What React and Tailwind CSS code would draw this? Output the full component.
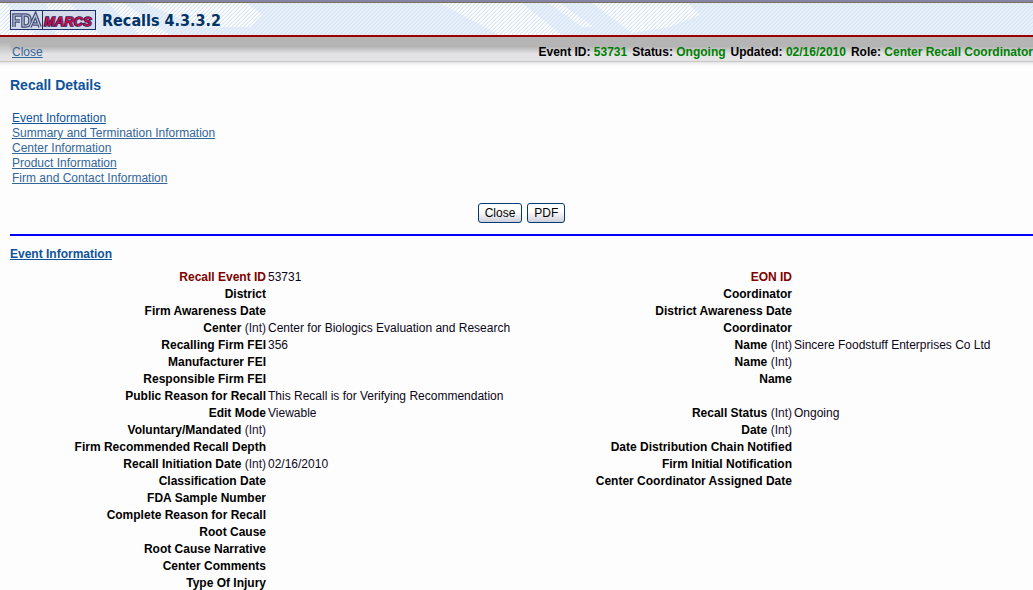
const EVENT_ROWS = [
  [{ label: 'Recall Event ID', value: '53731', accent: true }, { label: 'EON ID', accent: true }],
  [{ label: 'District' }, { label: 'Coordinator' }],
  [{ label: 'Firm Awareness Date' }, { label: 'District Awareness Date' }],
  [{ label: 'Center', int: true, value: 'Center for Biologics Evaluation and Research' }, { label: 'Coordinator' }],
  [{ label: 'Recalling Firm FEI', value: '356' }, { label: 'Name', int: true, value: 'Sincere Foodstuff Enterprises Co Ltd' }],
  [{ label: 'Manufacturer FEI' }, { label: 'Name', int: true }],
  [{ label: 'Responsible Firm FEI' }, { label: 'Name' }],
  [{ label: 'Public Reason for Recall', value: 'This Recall is for Verifying Recommendation' }, null],
  [{ label: 'Edit Mode', value: 'Viewable' }, { label: 'Recall Status', int: true, value: 'Ongoing' }],
  [{ label: 'Voluntary/Mandated', int: true }, { label: 'Date', int: true }],
  [{ label: 'Firm Recommended Recall Depth' }, { label: 'Date Distribution Chain Notified' }],
  [{ label: 'Recall Initiation Date', int: true, value: '02/16/2010' }, { label: 'Firm Initial Notification' }],
  [{ label: 'Classification Date' }, { label: 'Center Coordinator Assigned Date' }],
  [{ label: 'FDA Sample Number' }, null],
  [{ label: 'Complete Reason for Recall' }, null],
  [{ label: 'Root Cause' }, null],
  [{ label: 'Root Cause Narrative' }, null],
  [{ label: 'Center Comments' }, null],
  [{ label: 'Type Of Injury' }, null],
];

const SECTIONS = [
  'Event Information',
  'Summary and Termination Information',
  'Center Information',
  'Product Information',
  'Firm and Contact Information',
];

const STATUS = [
  ['Event ID:', '53731'],
  ['Status:', 'Ongoing'],
  ['Updated:', '02/16/2010'],
  ['Role:', 'Center Recall Coordinator'],
];

function Logo() {
  const fda = 'M4 17V5h7M4 11h6M13 16V5h3q4 0 4 5.5t-4 5.500zM20 17l5.500-12 4.500 12M23 14h5';
  return (
    <svg className="h-5 w-[86px] shrink-0" viewBox="0 0 86 20" role="img" aria-label="FDA MARCS">
      <rect x="0.5" y="0.5" width="85" height="19" fill="#d5dae8" stroke="#1c2f6b" />
      <path d="M32.5 0v20" stroke="#1c2f6b" />
      <g fill="none">
        <path d={fda} stroke="#3f4c78" strokeWidth="3.600" />
        <path d={fda} stroke="#c3c9da" strokeWidth="1.200" />
      </g>
      <text x="34" y="16" fontFamily="Liberation Sans, sans-serif" fontSize="13" fontWeight="bold" fontStyle="italic" fill="#c8104c" stroke="#2b1c5c" strokeWidth="1.500" paintOrder="stroke">MARCS</text>
    </svg>
  );
}

function HeaderPattern() {
  return (
    <svg className="absolute inset-0 h-full w-full" aria-hidden="true">
      <defs>
        <pattern id="stripes" width="4" height="4" patternUnits="userSpaceOnUse">
          <g fill="#d6e4f4">
            <rect x="3" y="0" width="1" height="1" />
            <rect x="2" y="1" width="1" height="1" />
            <rect x="1" y="2" width="1" height="1" />
            <rect x="0" y="3" width="1" height="1" />
          </g>
          <g fill="#d6e4f4" opacity="0.5">
            <rect x="2" y="0" width="1" height="1" />
            <rect x="1" y="1" width="1" height="1" />
            <rect x="0" y="2" width="1" height="1" />
            <rect x="3" y="3" width="1" height="1" />
          </g>
        </pattern>
      </defs>
      <rect width="100%" height="100%" fill="#e7f0fa" />
      <g fill="#fff">
        <path d="M0 0h6l30 32h-36zM46 0h24l30 32h-44zM108 0h16l46 32h-30zM145 0h102l15 12-12 12h-50z" />
        <path d="M440 0h82l40 32h-63zM549 0h11l34 24h-12zM592 0h96l12 12-30 12-38 6z" />
      </g>
      <rect width="100%" height="100%" fill="url(#stripes)" />
    </svg>
  );
}

function FieldCells({ field }) {
  if (!field) {
    return (
      <>
        <td />
        <td />
      </>
    );
  }
  return (
    <>
      <th scope="row" className={field.accent ? 'p-0 pr-px text-right font-bold text-[#800000]' : 'p-0 pr-px text-right font-bold'}>
        {field.label}
        {field.int && <span className="font-normal text-[#1c0f33]"> (Int)</span>}
      </th>
      <td className="p-0 pl-px text-[#0c0618]">{field.value}</td>
    </>
  );
}

function PushButton({ children }) {
  return (
    <button type="button" className="h-5 rounded-[3px] border border-[#003c74] bg-linear-to-b from-white from-40% to-[#cfcfdc] px-[6px] leading-4">
      {children}
    </button>
  );
}

export default function App() {
  return (
    <div className="overflow-x-hidden border-b border-[#dddddd] bg-[#fdfdfd] font-['Liberation_Sans',Arial,sans-serif] text-xs leading-[15px] text-black">
      <header className="border-b-2 border-[#990000]">
        <div className="h-[3px] border-b border-[#77735f] bg-[#8884a8]" />
        <div className="relative flex h-8 items-center pl-[10px]">
          <HeaderPattern />
          <div className="relative flex items-center gap-[6px] pt-[2px]">
            <Logo />
            <h1 className="pt-[2px] font-['DejaVu_Sans_Condensed','DejaVu_Sans',sans-serif] text-base leading-5 font-bold whitespace-nowrap text-[#003366]">Recalls 4.3.3.2</h1>
          </div>
        </div>
      </header>

      <div className="flex h-[25px] border-b border-[#c8c8c0]">
        <div className="w-[10px] bg-linear-to-b from-[#b5b5b5] from-20% to-[#e3e3e6] to-80%" />
        <div className="flex grow items-center justify-between bg-linear-to-b from-[#b5b5b5] from-40% to-[#e3e3e6] to-70% pt-[6px] pl-[2px]">
          <a href="#close" className="text-[#336699] underline">Close</a>
          <div className="flex gap-[5px] font-bold whitespace-nowrap">
            {STATUS.map(([name, value]) => (
              <span key={name}>
                {name} <span className="text-[#008000]">{value}</span>
              </span>
            ))}
          </div>
        </div>
      </div>
      <div className="h-1 bg-linear-to-b from-[#e6e6ea] to-[#fdfdfd]" />

      <main className="pl-[10px]">
        <h2 className="pt-[11px] text-sm leading-4 font-bold text-[#0f539b]">Recall Details</h2>
        <nav className="flex flex-col items-start pt-[18px] pl-[2px]">
          {SECTIONS.map((name, i) => (
            <a key={name} href="#event" className={i === 0 ? 'text-[#0f539b] underline' : 'text-[#336699] underline'}>
              {name}
            </a>
          ))}
        </nav>

        <div className="flex justify-center gap-[5px] pt-[17px] pb-[11px]">
          <PushButton>Close</PushButton>
          <PushButton>PDF</PushButton>
        </div>

        <hr className="border-t-2 border-[#0000ff]" />

        <h3 className="pt-[11px] pb-[7px] font-bold text-[#0f539b] underline" id="event">Event Information</h3>

        <table className="w-full table-fixed border-collapse whitespace-nowrap">
          <colgroup>
            <col className="w-[257px]" />
            <col className="w-[26%]" />
            <col className="w-[260px]" />
            <col />
          </colgroup>
          <tbody>
            {EVENT_ROWS.map(([left, right]) => (
              <tr key={left.label} className="h-[17px]">
                <FieldCells field={left} />
                <FieldCells field={right} />
              </tr>
            ))}
          </tbody>
        </table>
      </main>
    </div>
  );
}
